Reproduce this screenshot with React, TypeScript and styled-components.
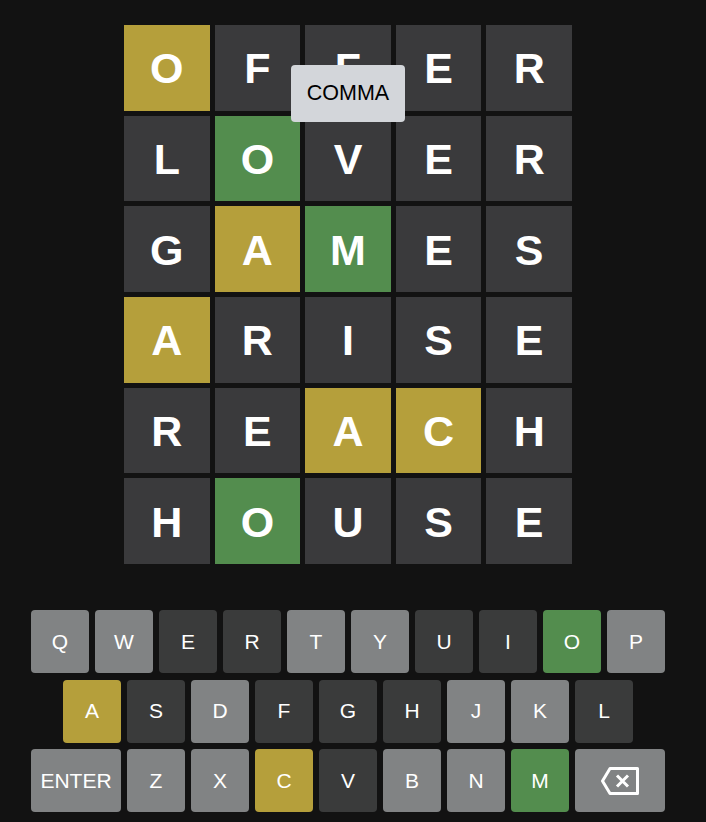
import React from "react";
import styled, { createGlobalStyle } from "styled-components";

type Status = "absent" | "present" | "correct" | "unused";

const palette: Record<Status, string> = {
  absent: "#3a3a3c",
  present: "#b59f3b",
  correct: "#538d4e",
  unused: "#818384",
};

const keyPalette: Record<Status, string> = {
  absent: "#3a3b3b",
  present: "#b59f3b",
  correct: "#538d4e",
  unused: "#818384",
};

const GlobalStyle = createGlobalStyle`
  html, body {
    margin: 0;
    padding: 0;
    background: #121212;
  }
  body {
    font-family: "Liberation Sans", Arial, sans-serif;
  }
`;

const Page = styled.main`
  width: 696px;
  padding-top: 25px;
  display: flex;
  flex-direction: column;
  align-items: center;
`;

const BoardWrap = styled.div`
  position: relative;
`;

const Board = styled.div`
  width: 448px;
  height: 539px;
  display: grid;
  grid-template-rows: repeat(6, 1fr);
  gap: 5px;
`;

const Row = styled.div`
  display: grid;
  grid-template-columns: repeat(5, 1fr);
  gap: 5px;
`;

const Tile = styled.div<{ $status: Status }>`
  background: ${(p) => palette[p.$status]};
  color: #ffffff;
  display: flex;
  align-items: center;
  justify-content: center;
  font-family: "Liberation Sans", Arial, sans-serif;
  font-weight: 700;
  font-size: 43px;
  line-height: 1;
  padding-top: 2px;
  box-sizing: border-box;
`;

const Tooltip = styled.div`
  position: absolute;
  top: 40px;
  left: 50%;
  transform: translateX(-50%);
  width: 114px;
  height: 57px;
  box-sizing: border-box;
  background: #d3d6da;
  border-radius: 4px;
  color: #000;
  font-size: 21.5px;
  display: flex;
  align-items: center;
  justify-content: center;
`;

const Keyboard = styled.div`
  margin-top: 46px;
  display: flex;
  flex-direction: column;
  align-items: center;
  gap: 6.5px;
`;

const KeyRow = styled.div`
  display: flex;
  gap: 6px;
`;

const Key = styled.button<{ $status: Status; $wide?: boolean }>`
  width: ${(p) => (p.$wide ? "90px" : "58px")};
  height: 63px;
  border: none;
  border-radius: 4px;
  background: ${(p) => keyPalette[p.$status]};
  color: #ffffff;
  font-family: "Liberation Sans", Arial, sans-serif;
  font-size: 21px;
  display: flex;
  align-items: center;
  justify-content: center;
  padding: 0;
  cursor: pointer;
`;

const guesses: { word: string; s: string }[] = [
  { word: "OFFER", s: "paaaa" },
  { word: "LOVER", s: "acaaa" },
  { word: "GAMES", s: "apcaa" },
  { word: "ARISE", s: "paaaa" },
  { word: "REACH", s: "aappa" },
  { word: "HOUSE", s: "acaaa" },
];

const code: Record<string, Status> = { a: "absent", p: "present", c: "correct", u: "unused" };

const keyRows: [string, string][] = [
  ["QWERTYUIOP", "uuaauuaacu"],
  ["ASDFGHJKL", "paua aauua".replace(" ", "")],
  ["ZXCVBNM", "uupauuc"],
];

const BackspaceIcon = () => (
  <svg width="38" height="28" viewBox="0 0 38 28" fill="none">
    <path
      d="M9 1.5 H36.5 V26.5 H9 L1.5 14 Z"
      stroke="#fff"
      strokeWidth="3"
      strokeLinejoin="round"
    />
    <path d="M16 8.5 L27 19.5 M27 8.5 L16 19.5" stroke="#fff" strokeWidth="3" />
  </svg>
);

export default function App() {
  return (
    <>
      <GlobalStyle />
      <Page>
        <BoardWrap>
          <Board>
            {guesses.map((g, r) => (
              <Row key={r}>
                {g.word.split("").map((ch, i) => (
                  <Tile key={i} $status={code[g.s[i]]}>
                    {ch}
                  </Tile>
                ))}
              </Row>
            ))}
          </Board>
          <Tooltip>COMMA</Tooltip>
        </BoardWrap>
        <Keyboard>
          <KeyRow>
            {keyRows[0][0].split("").map((ch, i) => (
              <Key key={ch} $status={code[keyRows[0][1][i]]}>
                {ch}
              </Key>
            ))}
          </KeyRow>
          <KeyRow>
            {keyRows[1][0].split("").map((ch, i) => (
              <Key key={ch} $status={code[keyRows[1][1][i]]}>
                {ch}
              </Key>
            ))}
          </KeyRow>
          <KeyRow>
            <Key $status="unused" $wide>
              ENTER
            </Key>
            {keyRows[2][0].split("").map((ch, i) => (
              <Key key={ch} $status={code[keyRows[2][1][i]]}>
                {ch}
              </Key>
            ))}
            <Key $status="unused" $wide aria-label="backspace">
              <BackspaceIcon />
            </Key>
          </KeyRow>
        </Keyboard>
      </Page>
    </>
  );
}
